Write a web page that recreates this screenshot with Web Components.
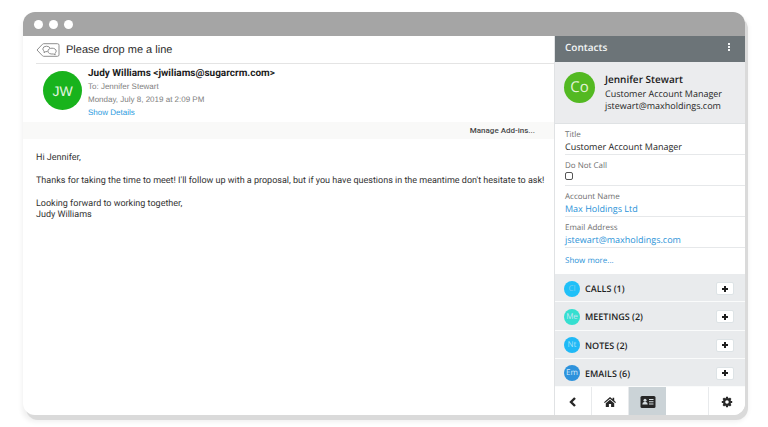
<!DOCTYPE html>
<html lang="en">
<head>
<meta charset="utf-8">
<meta name="viewport" content="width=device-width, initial-scale=1">
<title>Please drop me a line</title>
<style>
  body {
    margin: 0;
    background: #fff;
    font-family: "Open Sans", "Noto Sans", sans-serif;
    color: #222;
    text-rendering: geometricPrecision;
  }
</style>
</head>
<body>
<app-window>
  <mail-message
    slot="main"
    subject="Please drop me a line"
    from="Judy Williams &lt;jwiliams@sugarcrm.com&gt;"
    to="Jennifer Stewart"
    date="Monday, July 8, 2019 at 2:09 PM"
    initials="JW">
    <p>Hi Jennifer,</p>
    <p>Thanks for taking the time to meet! I'll follow up with a proposal, but if you have questions in the meantime don't hesitate to ask!</p>
    <p>Looking forward to working together,<br>Judy Williams</p>
  </mail-message>
  <crm-panel slot="side" heading="Contacts">
    <contact-card
      initials="Co"
      name="Jennifer Stewart"
      role-title="Customer Account Manager"
      email="jstewart@maxholdings.com"></contact-card>
    <contact-field label="Title" value="Customer Account Manager"></contact-field>
    <contact-field label="Do Not Call" type="checkbox"></contact-field>
    <contact-field label="Account Name" value="Max Holdings Ltd" href="#account"></contact-field>
    <contact-field label="Email Address" value="jstewart@maxholdings.com" href="mailto:jstewart@maxholdings.com"></contact-field>
    <show-more></show-more>
    <related-list>
      <related-row code="Cl" color="#1fc0f8" ink="#7fcdee" label="CALLS" count="1"></related-row>
      <related-row code="Me" color="#35dfd0" ink="#c9e4f2" label="MEETINGS" count="2"></related-row>
      <related-row code="Nt" color="#1fb9f6" ink="#a5e0f8" label="NOTES" count="2"></related-row>
      <related-row code="Em" color="#2d92dc" ink="#d5eafa" label="EMAILS" count="6"></related-row>
    </related-list>
    <panel-nav slot="nav"></panel-nav>
  </crm-panel>
</app-window>

<script>
class AppWindow extends HTMLElement {
  constructor() {
    super();
    this.attachShadow({ mode: "open" });
    this.shadowRoot.innerHTML = `
      <style>
        :host {
          display: flex;
          box-sizing: border-box;
          min-height: 100vh;
          padding: 12px 23px;
        }
        section {
          flex: 1;
          min-width: 0;
          display: flex;
          flex-direction: column;
          border-radius: 12px;
          overflow: hidden;
          background: #fff;
          box-shadow: 3px 5px 0 #dadada, 1px 5px 5px 2px #f0f0f0;
        }
        header {
          display: flex;
          align-items: center;
          gap: 6px;
          height: 24px;
          padding-left: 11px;
          background: #a5a5a5;
        }
        i {
          width: 9px;
          height: 9px;
          border-radius: 50%;
          background: #fff;
        }
        .columns {
          flex: 1;
          display: grid;
          grid-template-columns: minmax(0, 1fr) 191px;
        }
      </style>
      <section>
        <header><i></i><i></i><i></i></header>
        <div class="columns">
          <slot name="main"></slot>
          <slot name="side"></slot>
        </div>
      </section>
    `;
  }
}
customElements.define("app-window", AppWindow);

class RoundAvatar extends HTMLElement {
  constructor() {
    super();
    this.attachShadow({ mode: "open" });
    this.shadowRoot.innerHTML = `
      <style>
        :host {
          display: flex;
          align-items: center;
          justify-content: center;
          flex: none;
          width: var(--size, 16px);
          height: var(--size, 16px);
          border-radius: 50%;
          line-height: 1;
        }
      </style>
      <slot></slot>
    `;
  }
}
customElements.define("round-avatar", RoundAvatar);

class MailMessage extends HTMLElement {
  constructor() {
    super();
    this.attachShadow({ mode: "open" });
    const from = this.getAttribute("from").replace("<", "&lt;").replace(">", "&gt;");
    this.shadowRoot.innerHTML = `
      <style>
        :host {
          display: block;
          min-width: 0;
          font-family: "Liberation Sans", Arial, sans-serif;
        }
        .subject {
          display: flex;
          align-items: center;
          gap: 6px;
          height: 27px;
          margin-left: 13px;
          border-bottom: 1px solid #e4e4e4;
        }
        .subject svg {
          width: 24px;
          height: 14px;
        }
        h1 {
          margin: 0;
          font-size: 11px;
          line-height: 14px;
          font-weight: 400;
          color: #2c2c2c;
        }
        .sender {
          display: flex;
          gap: 6px;
          height: 55px;
          padding: 3px 0 0 20px;
        }
        round-avatar {
          --size: 39px;
          margin-top: 4px;
          background: #18b31c;
          color: #e2f5e0;
          font-size: 14px;
        }
        .sender p,
        .sender h2,
        .sender a {
          display: block;
          margin: 0;
          font-size: 8px;
          line-height: 13px;
          color: #808080;
          white-space: nowrap;
        }
        .sender h2 {
          font-family: Roboto, sans-serif;
          font-size: 10px;
          color: #1c1c1c;
        }
        .sender a {
          color: #2b9be0;
          text-decoration: none;
        }
        .addins {
          display: flex;
          justify-content: flex-end;
          align-items: center;
          height: 17px;
          padding-right: 19px;
          background: #f9f9f8;
        }
        .addins button {
          padding: 0;
          border: 0;
          background: none;
          font: 500 8px Roboto, sans-serif;
          color: #484848;
        }
        .text {
          padding: 14px 4px 14px 13px;
          font-family: Roboto, sans-serif;
          font-size: 9px;
          line-height: 11px;
          color: #333;
        }
        ::slotted(p) {
          margin: 0 0 12px;
        }
      </style>
      <div class="subject">
        <svg viewBox="0 0 24 14" fill="none" stroke="#8f8f8f" stroke-width="1">
          <path d="M1 7 6.5 1.2Q7 .7 7.700 .7H21.500Q23 .7 23 2.200V11.800Q23 13.300 21.500 13.300H7.700Q7 13.300 6.500 12.800Z"/>
          <path d="M11.500 8.600H9.800L8 9.700 8.200 8Q6.800 7.200 6.800 5.900 7 3.300 10.400 3.200 13.400 3.200 14 5.200"/>
          <path d="M16 5.200C18.400 5.200 20.200 6.400 20.200 8.100 20.200 9.100 19.700 9.800 18.900 10.300L19.200 11.900 17.300 11C14 11.400 11.900 10 11.900 8.100 11.900 6.400 13.600 5.200 16 5.200Z"/>
        </svg>
        <h1>${this.getAttribute("subject")}</h1>
      </div>
      <div class="sender">
        <round-avatar>${this.getAttribute("initials")}</round-avatar>
        <div>
          <h2>${from}</h2>
          <p>To: ${this.getAttribute("to")}</p>
          <p>${this.getAttribute("date")}</p>
          <a href="#details">Show Details</a>
        </div>
      </div>
      <div class="addins"><button type="button">Manage Add-ins...</button></div>
      <div class="text"><slot></slot></div>
    `;
  }
}
customElements.define("mail-message", MailMessage);

class CrmPanel extends HTMLElement {
  constructor() {
    super();
    this.attachShadow({ mode: "open" });
    this.shadowRoot.innerHTML = `
      <style>
        :host {
          display: flex;
          flex-direction: column;
          border-left: 1px solid #e0e2e4;
        }
        header {
          display: flex;
          align-items: center;
          justify-content: space-between;
          height: 26px;
          padding: 0 10px;
          background: #6c7478;
          color: #f2f4f5;
        }
        h2 {
          margin: 0 0 4px;
          font-size: 10px;
          font-weight: 600;
        }
        button {
          display: flex;
          padding: 0;
          border: 0;
          margin-bottom: 4px;
          background: none;
          color: inherit;
        }
        svg {
          width: 10px;
          height: 10px;
        }
        .body {
          flex: 1;
          display: flex;
          flex-direction: column;
        }
      </style>
      <header>
        <h2>${this.getAttribute("heading")}</h2>
        <button type="button" aria-label="More actions">
          <svg viewBox="0 0 10 10" fill="currentColor">
            <rect x="3" y="1" width="2" height="2"/>
            <rect x="3" y="4" width="2" height="2"/>
            <rect x="3" y="7" width="2" height="2"/>
          </svg>
        </button>
      </header>
      <div class="body"><slot></slot></div>
      <slot name="nav"></slot>
    `;
  }
}
customElements.define("crm-panel", CrmPanel);

class ContactCard extends HTMLElement {
  constructor() {
    super();
    this.attachShadow({ mode: "open" });
    this.shadowRoot.innerHTML = `
      <style>
        :host {
          display: flex;
          gap: 10px;
          box-sizing: border-box;
          height: 62px;
          padding: 10px 9px;
          border-bottom: 1px solid #dfe2e4;
          background: #ebecee;
        }
        round-avatar {
          --size: 31px;
          background: #53b922;
          color: #e3f4d9;
          font-size: 15px;
        }
        h3,
        p {
          margin: 0;
          font-size: 9px;
          line-height: 12px;
          color: #262626;
          white-space: nowrap;
        }
        h3 {
          margin-bottom: 2px;
          font-size: 10px;
          line-height: 14px;
          font-weight: 600;
          color: #1a1a1a;
        }
      </style>
      <round-avatar>${this.getAttribute("initials")}</round-avatar>
      <div>
        <h3>${this.getAttribute("name")}</h3>
        <p>${this.getAttribute("role-title")}</p>
        <p>${this.getAttribute("email")}</p>
      </div>
    `;
  }
}
customElements.define("contact-card", ContactCard);

class ContactField extends HTMLElement {
  constructor() {
    super();
    this.attachShadow({ mode: "open" });
    const label = this.getAttribute("label");
    const value = this.getAttribute("value");
    const href = this.getAttribute("href");
    let content = `<span class="label">${label}</span><span class="value">${value}</span>`;
    if (href) content = `<span class="label">${label}</span><a class="value" href="${href}">${value}</a>`;
    if (this.getAttribute("type") === "checkbox") {
      content = `<label class="label" for="box">${label}</label><input id="box" type="checkbox">`;
    }
    this.shadowRoot.innerHTML = `
      <style>
        :host {
          display: flex;
          flex-direction: column;
          align-items: flex-start;
          box-sizing: border-box;
          height: 31px;
          margin-left: 10px;
          padding-top: 5px;
          border-bottom: 1px solid #e6e8ea;
          white-space: nowrap;
        }
        .label {
          font-size: 8px;
          line-height: 12px;
          color: #6e6e6e;
        }
        .value {
          font-size: 9px;
          line-height: 11px;
          color: #262626;
        }
        a.value {
          color: #2b93d8;
          text-decoration: none;
        }
        input {
          appearance: none;
          box-sizing: border-box;
          width: 8px;
          height: 8px;
          margin: 0;
          border: 1px solid #555;
          border-radius: 2px;
          background: #fff;
        }
        input:checked {
          background: #555;
        }
      </style>
      ${content}
    `;
  }
}
customElements.define("contact-field", ContactField);

class ShowMore extends HTMLElement {
  constructor() {
    super();
    this.attachShadow({ mode: "open" });
    this.shadowRoot.innerHTML = `
      <style>
        :host {
          display: flex;
          align-items: center;
          height: 26px;
          padding-left: 10px;
        }
        a {
          font-size: 8px;
          line-height: 12px;
          color: #2b93d8;
          text-decoration: none;
        }
      </style>
      <a href="#more">Show more...</a>
    `;
  }
}
customElements.define("show-more", ShowMore);

class RelatedList extends HTMLElement {
  constructor() {
    super();
    this.attachShadow({ mode: "open" });
    this.shadowRoot.innerHTML = `
      <style>
        :host {
          flex: 1;
          display: flex;
          flex-direction: column;
        }
      </style>
      <slot></slot>
    `;
  }
}
customElements.define("related-list", RelatedList);

class RelatedRow extends HTMLElement {
  constructor() {
    super();
    this.attachShadow({ mode: "open" });
    const label = this.getAttribute("label");
    this.shadowRoot.innerHTML = `
      <style>
        :host {
          flex: 1 0 28px;
          display: flex;
          align-items: center;
          gap: 5px;
          box-sizing: border-box;
          max-height: 30px;
          padding: 2px 11px 0 9px;
          border-bottom: 1px solid #fafbfb;
          background: #e9ebed;
        }
        round-avatar {
          background: ${this.getAttribute("color")};
          color: ${this.getAttribute("ink")};
          font-size: 8px;
        }
        h4 {
          flex: 1;
          margin: 0;
          font-size: 9px;
          font-weight: 600;
          color: #1f1f1f;
        }
        button {
          display: flex;
          align-items: center;
          justify-content: center;
          width: 18px;
          height: 13px;
          padding: 0;
          border: 1px solid #dde3e6;
          border-radius: 2px;
          background: #fff;
          color: #1f1f1f;
        }
        svg {
          width: 6px;
          height: 6px;
        }
      </style>
      <round-avatar>${this.getAttribute("code")}</round-avatar>
      <h4>${label} (${this.getAttribute("count")})</h4>
      <button type="button" aria-label="Add to ${label.toLowerCase()}">
        <svg viewBox="0 0 6 6" stroke="currentColor" stroke-width="2"><path d="M3 0V6M0 3H6"/></svg>
      </button>
    `;
  }
}
customElements.define("related-row", RelatedRow);

class PanelNav extends HTMLElement {
  constructor() {
    super();
    this.attachShadow({ mode: "open" });
    this.shadowRoot.innerHTML = `
      <style>
        :host {
          display: grid;
          grid-template-columns: 37px 37px 37px 1fr 37px;
          height: 28px;
          background: #fff;
        }
        button {
          display: flex;
          align-items: center;
          justify-content: center;
          padding: 2px 0 0;
          border: 0;
          border-right: 1px solid #e8eaec;
          background: none;
          color: #262626;
        }
        button.active {
          border: 0;
          background: #cbd3d7;
        }
        button:last-child {
          grid-column: 5;
          border-right: 0;
          border-left: 1px solid #e8eaec;
        }
        svg {
          width: 16px;
          height: 12px;
        }
      </style>
      <button type="button" aria-label="Back">
        <svg viewBox="0 0 16 12" fill="none" stroke="currentColor" stroke-width="2.400"><path d="M10 2 6 6 10 10"/></svg>
      </button>
      <button type="button" aria-label="Home">
        <svg viewBox="0 0 16 12" fill="currentColor">
          <path d="M8 1 2 6.200 2.800 7.100 8 2.700 13.200 7.100 14 6.200 12.200 4.600V1.700H10.600V3.200Z"/>
          <path d="M8 3.700 3.800 7.200V11H6.900V8H9.100V11H12.200V7.200Z"/>
        </svg>
      </button>
      <button type="button" class="active" aria-label="Contact">
        <svg viewBox="0 0 16 12">
          <rect x="0.500" y="0" width="15" height="12" rx="1.500" fill="#262626"/>
          <g fill="#d5dde0">
            <circle cx="5" cy="4.300" r="1.500"/>
            <path d="M2.300 8.500Q2.300 6.300 4 6.100H6Q7.700 6.300 7.700 8.500Z"/>
            <path d="M9 3H13.500V4H9ZM9 5.200H13.500V6.200H9ZM9 7.400H13.500V8.400H9Z"/>
          </g>
        </svg>
      </button>
      <button type="button" aria-label="Settings">
        <svg viewBox="0 0 16 12">
          <circle cx="8" cy="6" r="2.900" fill="none" stroke="currentColor" stroke-width="2.200"/>
          <path d="M8 .8V2.400M8 9.600V11.200M2.800 6H4.400M11.600 6H13.200M4.300 2.300 5.500 3.500M10.500 8.500 11.700 9.700M4.300 9.700 5.500 8.500M10.500 3.500 11.700 2.300" stroke="currentColor" stroke-width="2.200"/>
        </svg>
      </button>
    `;
  }
}
customElements.define("panel-nav", PanelNav);
</script>
</body>
</html>
